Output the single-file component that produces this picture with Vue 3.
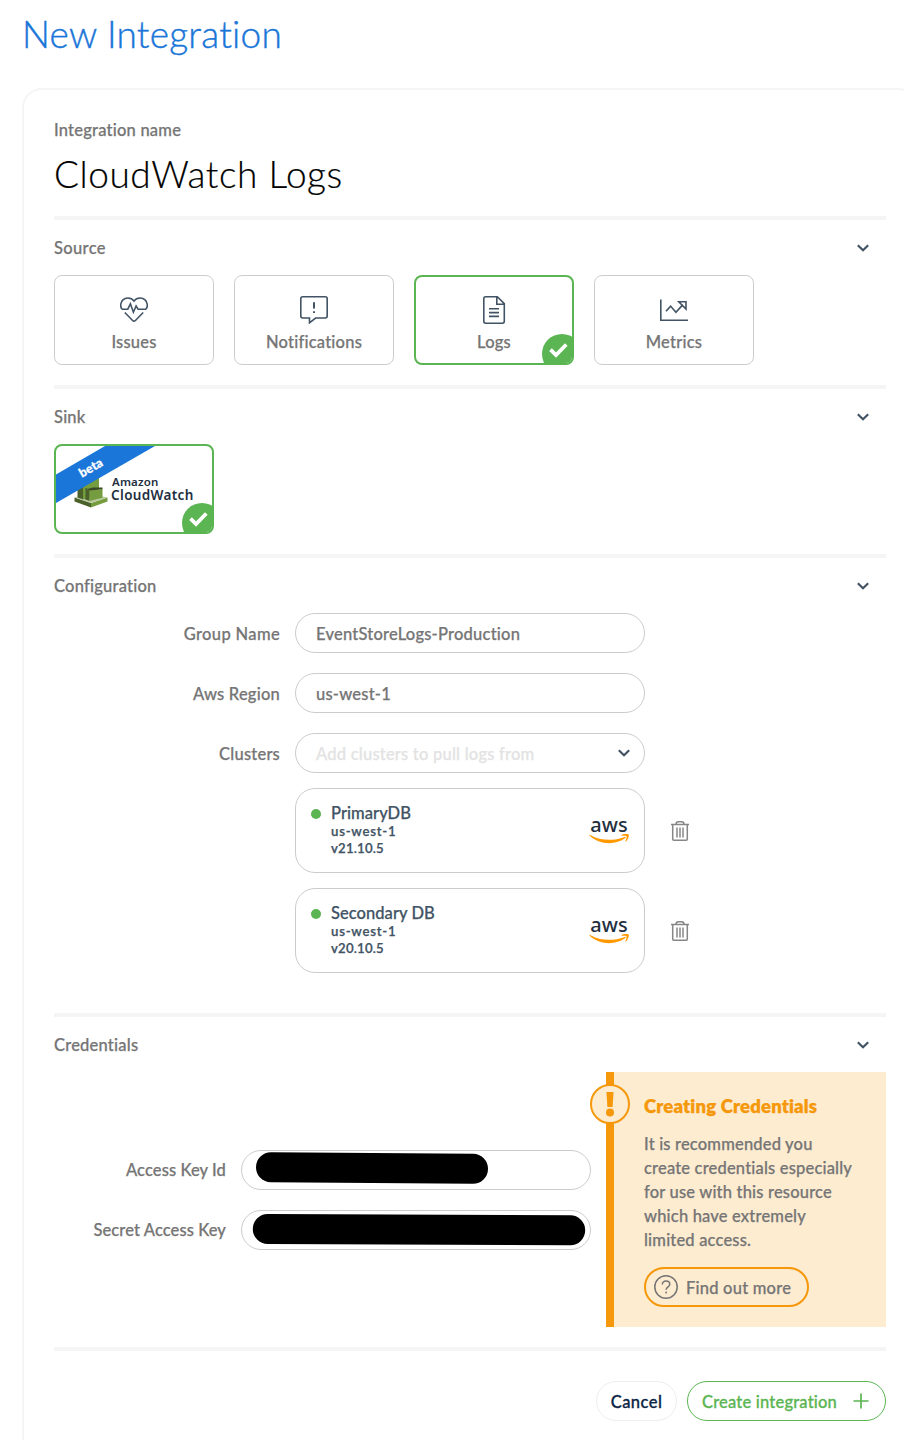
<script setup>
const sources = [
  { id: 'issues', label: 'Issues' },
  { id: 'notifications', label: 'Notifications' },
  { id: 'logs', label: 'Logs', selected: true },
  { id: 'metrics', label: 'Metrics' },
]
const clusters = [
  { name: 'PrimaryDB', region: 'us-west-1', version: 'v21.10.5' },
  { name: 'Secondary DB', region: 'us-west-1', version: 'v20.10.5' },
]
</script>

<template>
  <main class="page">
    <h1 class="title">New Integration</h1>
    <div class="panel">
      <header class="name">
        <label class="name-label">Integration name</label>
        <div class="name-value">CloudWatch Logs</div>
      </header>

      <section class="section">
        <div class="section-head">
          <span class="roomy">Source</span>
          <svg class="chevron" viewBox="0 0 14 8"><path d="M1.8 1.3 7 6.2l5.2-4.9" /></svg>
        </div>
        <div class="tiles">
          <div v-for="s in sources" :key="s.id" class="tile" :class="{ selected: s.selected }">
            <svg class="tile-icon" viewBox="0 0 28 28">
              <template v-if="s.id === 'issues'">
                <path d="M2 13.2h5.8l2.6-5.4 3 8.4 2.7-6.2 2 3.2H26" />
                <path d="M2 13.2C.7 11.6.6 10.2.7 8.8 1 4.9 4 2 7.8 2c2.6 0 4.8 1 6.2 3.1C15.4 3 17.6 2 20.2 2c3.8 0 6.8 2.9 7.1 6.8.1 1.4 0 2.8-1.3 4.4" />
                <path d="m4.8 16.5 8 8.2c.8.7 1.6.7 2.4 0l8-8.2" />
              </template>
              <template v-else-if="s.id === 'notifications'">
                <path d="M2.7.8h22.6c1.1 0 1.9.8 1.9 1.9v17.4c0 1.100-.8 1.900-1.900 1.900H15.600l-6.100 4.800V22H2.700C1.600 22 .8 21.200.8 20.100V2.700C.8 1.600 1.600.8 2.700.8Z" />
                <path class="thick" d="M14 6.300v6.200M14 15.200v1.800" />
              </template>
              <template v-else-if="s.id === 'logs'">
                <path d="M5.700.8h11.600l7 6.800v17.700c0 1.100-.8 1.900-1.900 1.900H5.700c-1.100 0-1.900-.8-1.900-1.900V2.700C3.800 1.600 4.600.8 5.700.8ZM16.800.8v7.400h7.400M9 12.800h10M9 16.600h10M9 20.400h10" />
              </template>
              <template v-else>
                <path d="M.8 3.600v20.600H28M6 15.300l4.600-5.200 5.300 6.100 7-7.600M18.800 5.800h7.200v7.200Z" />
              </template>
            </svg>
            <span class="tile-label">{{ s.label }}</span>
            <svg v-if="s.selected" class="check" viewBox="0 0 32 32">
              <circle cx="20" cy="21" r="20" />
              <path d="m8.500 16.700 5.500 5.300L24.300 11.500" />
            </svg>
          </div>
        </div>
      </section>

      <section class="section">
        <div class="section-head">
          <span>Sink</span>
          <svg class="chevron" viewBox="0 0 14 8"><path d="M1.8 1.3 7 6.2l5.2-4.9" /></svg>
        </div>
        <div class="tiles">
          <div class="tile selected sink">
            <svg class="cw-logo" viewBox="0 0 34 36">
              <path fill="#4b612c" d="M.5 25.500 17 31v4.500L.5 29.500Z" />
              <path fill="#759c3e" d="M17 31 33.500 25.500v4L17 35.500Z" />
              <path fill="#b7ca9d" d="m.5 25.500 16.500-3.500 16.500 3.500L17 31Z" />
              <path fill="#4b612c" d="M3.500 10l6 1v16.500l-6-2Z" />
              <path fill="#759c3e" d="M9 3h16v14l-12 11-4-1.500Z" />
              <path fill="#4b612c" d="M11.500 16h1.500v12l-1.500-.6Z" />
              <path fill="#3c4929" d="m13 17 6-1.500h9.500v2L17 18.800Z" />
              <path fill="#4b612c" d="M13 17l2.500 1v11l-2.500-1Z" />
              <path fill="#759c3e" d="M15.500 18.700 28.500 17v8.700l-13 3.300Z" />
            </svg>
            <div class="cw-text"><span class="cw-a">Amazon</span><span class="cw-b">CloudWatch</span></div>
            <svg class="ribbon" viewBox="0 0 100 57"><path d="M0 28.500 49 0h50L0 57Z" /></svg>
            <span class="beta">beta</span>
            <svg class="check" viewBox="0 0 32 32">
              <circle cx="20" cy="21" r="20" />
              <path d="m8.500 16.700 5.500 5.300L24.300 11.500" />
            </svg>
          </div>
        </div>
      </section>

      <section class="section config">
        <div class="section-head">
          <span>Configuration</span>
          <svg class="chevron" viewBox="0 0 14 8"><path d="M1.8 1.3 7 6.2l5.2-4.9" /></svg>
        </div>
        <div class="fields">
          <div class="field"><label class="roomy">Group Name</label><div class="input"><span>EventStoreLogs-Production</span></div></div>
          <div class="field"><label>Aws Region</label><div class="input"><span>us-west-1</span></div></div>
          <div class="field">
            <label>Clusters</label>
            <div class="input select">
              <span>Add clusters to pull logs from</span>
              <svg class="chevron" viewBox="0 0 14 8"><path d="M1.8 1.3 7 6.2l5.2-4.9" /></svg>
            </div>
          </div>
        </div>
        <div v-for="c in clusters" :key="c.name" class="cluster-row">
          <div class="cluster">
            <i class="dot"></i>
            <div class="cluster-info">
              <div class="cluster-name">{{ c.name }}</div>
              <div class="cluster-meta region">{{ c.region }}</div>
              <div class="cluster-meta">{{ c.version }}</div>
            </div>
            <div class="aws">
              <span>aws</span>
              <svg viewBox="0 0 40 10">
                <path d="M.3 1.300C.1.800.600.500 1.100.900 11.500 6.800 24 7.200 35.700 2.900c.9-.4 1.500.6.7 1.200C26.500 11.500 9.800 11.100.3 1.300Z" />
                <path d="M32.600.9c2.300-1.200 6.300-1.300 7-.4.8 1-.5 5-2.500 6.900-.5.400-.9.200-.7-.4.7-1.600 1.600-3.800 1.100-4.700-.5-.7-2.900-.7-4.600-.5-.6 0-.7-.6-.3-.9Z" />
              </svg>
            </div>
          </div>
          <svg class="trash" viewBox="0 0 18 20">
            <path d="M0 3.600h18M5 3.500C5 1.600 5.800.8 7.300.8h3.400c1.500 0 2.300.8 2.300 2.700M1.700 3.700v14.500c0 .7.300 1 1 1h12.600c.7 0 1-.3 1-1V3.700" />
            <path d="M6 6.500v10M9 6.500v10M12 6.500v10" />
          </svg>
        </div>
      </section>

      <section class="section">
        <div class="section-head">
          <span>Credentials</span>
          <svg class="chevron" viewBox="0 0 14 8"><path d="M1.8 1.3 7 6.2l5.2-4.9" /></svg>
        </div>
        <div class="credentials">
          <div class="fields">
            <div class="field">
              <label>Access Key Id</label>
              <div class="input secret"><svg viewBox="0 0 350 40"><path d="M30 17.300 232 18.800" /></svg></div>
            </div>
            <div class="field">
              <label>Secret Access Key</label>
              <div class="input secret"><svg viewBox="0 0 350 40"><path d="M26.800 19 329.200 20.300" /></svg></div>
            </div>
          </div>
          <aside class="notice">
            <svg class="notice-badge" viewBox="0 0 40 40">
              <circle cx="20" cy="20" r="19" />
              <path d="M16.400 8h7.200l-1 15h-5.200Z" /><circle class="pt" cx="20" cy="28.500" r="4" />
            </svg>
            <h2>Creating Credentials</h2>
            <p>It is recommended you<br />create credentials especially<br />for use with this resource<br />which have extremely<br />limited access.</p>
            <button class="more">
              <svg viewBox="0 0 24 24"><circle cx="12" cy="12" r="11.200" /><path d="M8.300 9.400c0-2 1.500-3.400 3.700-3.400s3.800 1.300 3.800 3.200c0 2.600-3.700 2.700-3.700 5.600M12.100 16.500v1.900" /></svg>
              <span>Find out more</span>
            </button>
          </aside>
        </div>
      </section>

      <footer class="actions">
        <button class="cancel"><span>Cancel</span></button>
        <button class="create"><span>Create integration</span><svg viewBox="0 0 16 16"><path d="M8 .5v15M.5 8h15" /></svg></button>
      </footer>
    </div>
  </main>
</template>

<style>
html, body { background: #fff; overflow: hidden; }
</style>

<style scoped>
* { box-sizing: border-box; }
.page { width: 904px; height: 1440px; overflow: hidden; font: 500 16.5px/20px Lato, "Noto Sans", sans-serif; font-variant-ligatures: none; letter-spacing: .22px; color: #757575; -webkit-text-stroke: .25px; }
.roomy { letter-spacing: .35px; }
.title { margin: 0; height: 88px; padding: 11px 0 0 22px; font-size: 37px; line-height: 46px; font-weight: 300; letter-spacing: .22px; color: #1a76d8; -webkit-text-stroke: .4px; }
.panel { margin-left: 22px; width: 896px; height: 1400px; border: 2px solid #f5f5f5; border-radius: 20px; padding: 0 30px; }
.name { height: 126px; padding-top: 30px; }
.name-label { display: block; height: 20px; }
.name-value { margin-top: 10px; font-size: 37px; line-height: 48px; font-weight: 300; letter-spacing: .55px; color: #000; -webkit-text-stroke: .2px; }
.section { border-top: 4px solid #f5f5f5; padding-bottom: 20px; }
.section.config { padding-bottom: 40px; }
.section-head { height: 55px; display: flex; align-items: center; justify-content: space-between; padding-right: 16px; }
.chevron { width: 14px; height: 8px; fill: none; stroke: #415364; stroke-width: 2.2; }
.tiles { display: flex; gap: 20px; }
.tile { position: relative; width: 160px; height: 90px; border: 1px solid #ccc; border-radius: 8px; overflow: hidden; display: flex; flex-direction: column; align-items: center; padding-top: 20px; }
.tile.selected { border: 2px solid #5ab552; padding-top: 19px; }
.tile-icon { width: 28px; height: 28px; fill: none; stroke: #415364; stroke-width: 1.6; }
.tile-icon .thick { stroke-width: 2; }
.tile-label { margin-top: 8px; }
.check { position: absolute; right: -2px; bottom: -2px; width: 32px; height: 32px; fill: #5ab552; }
.check path { fill: none; stroke: #fff; stroke-width: 3.8; }
.tile.sink { flex-direction: row; align-items: flex-start; padding: 26px 0 0 18px; }
.cw-logo { width: 34px; height: 36px; }
.cw-text { display: flex; flex-direction: column; align-items: flex-start; margin: 3px 0 0 3px; font-family: "Noto Sans", sans-serif; color: #232f3e; -webkit-text-stroke: 0; }
.cw-a { font-size: 11.5px; line-height: 13px; font-weight: 600; letter-spacing: .15px; margin-left: 1px; }
.cw-b { font-size: 13.5px; line-height: 14px; font-weight: 600; letter-spacing: .35px; }
.ribbon { position: absolute; left: 0; top: 0; width: 100px; height: 57px; fill: #1a76d8; }
.beta { position: absolute; left: 15px; top: 12px; width: 40px; line-height: 20px; text-align: center; transform: rotate(-30deg); color: #fff; font-size: 12.5px; font-weight: 900; letter-spacing: .1px; }
.fields { display: flex; flex-direction: column; gap: 20px; }
.field { display: flex; align-items: center; gap: 15px; }
.field label { width: 226px; text-align: right; padding-top: 2px; }
.input { width: 350px; height: 40px; border: 1px solid #ccc; border-radius: 20px; padding: 0 20px; display: flex; align-items: center; }
.input span { padding-top: 2px; }
.select { color: #e3e3e3; justify-content: space-between; padding-right: 13px; }
.cluster-row { display: flex; align-items: center; margin: 15px 0 0 241px; }
.cluster { width: 350px; height: 85px; border: 1px solid #ccc; border-radius: 20px; padding: 14px 15px 0; display: flex; color: #415364; }
.dot { width: 10px; height: 10px; border-radius: 5px; background: #5ab552; margin: 6px 10px 0 0; }
.cluster-info { flex: 1; }
.cluster-name { padding-top: 1px; line-height: 19px; letter-spacing: .05px; }
.cluster-meta { font-size: 13.2px; line-height: 17px; font-weight: 600; letter-spacing: .2px; }
.cluster-meta.region { letter-spacing: .75px; }
.aws { width: 40px; font: 500 20px/20px "Noto Sans", sans-serif; letter-spacing: 0; color: #232f3e; text-align: center; padding-top: 12px; -webkit-text-stroke: 0; }
.aws svg { display: block; width: 40px; height: 10px; margin-top: -1px; fill: #f90; }
.trash { width: 18px; height: 20px; margin-left: 26px; fill: none; stroke: #868686; stroke-width: 1.5; }
.credentials { display: flex; }
.credentials .fields { padding-top: 78px; width: 552px; }
.credentials label { width: 172px; padding: 0; letter-spacing: .1px; }
.secret { padding: 0; }
.secret svg { width: 350px; height: 40px; margin: -1px; flex: none; stroke: #000; stroke-width: 30; stroke-linecap: round; }
.notice { position: relative; width: 280px; height: 255px; background: #feecd1; border-left: 8px solid #f5980b; padding: 22px 0 0 30px; }
.notice-badge { position: absolute; left: -24px; top: 12px; width: 40px; height: 40px; fill: #f5980b; }
.notice-badge circle { fill: #feecd1; stroke: #f5980b; stroke-width: 2; }
.notice-badge .pt { fill: #f5980b; stroke: none; }
.notice h2 { margin: 0; font-size: 18.5px; line-height: 24px; font-weight: 800; letter-spacing: .17px; color: #f5980b; }
.notice p { margin: 14px 0 15px; line-height: 24px; letter-spacing: .18px; white-space: nowrap; }
button { font: inherit; letter-spacing: inherit; color: inherit; background: none; display: flex; align-items: center; height: 40px; border-radius: 20px; white-space: nowrap; }
button span { padding-top: 2px; }
.more { width: 165px; border: 2px solid #f5980b; padding: 0 0 0 8px; gap: 8px; }
.more svg { width: 24px; height: 24px; fill: none; stroke: #757575; stroke-width: 1.5; }
.actions { border-top: 4px solid #f5f5f5; padding-top: 30px; display: flex; justify-content: flex-end; gap: 10px; }
.cancel { width: 81px; border: 1px solid #eee; justify-content: center; padding: 0; color: #0b2545; letter-spacing: .45px; -webkit-text-stroke: .3px; }
.create { width: 199px; border: 1px solid #5ab552; color: #5ab552; justify-content: space-between; padding: 0 16px 0 14px; letter-spacing: .2px; -webkit-text-stroke: .3px; }
.create svg { width: 16px; height: 16px; stroke: #5ab552; stroke-width: 1.7; }
</style>
